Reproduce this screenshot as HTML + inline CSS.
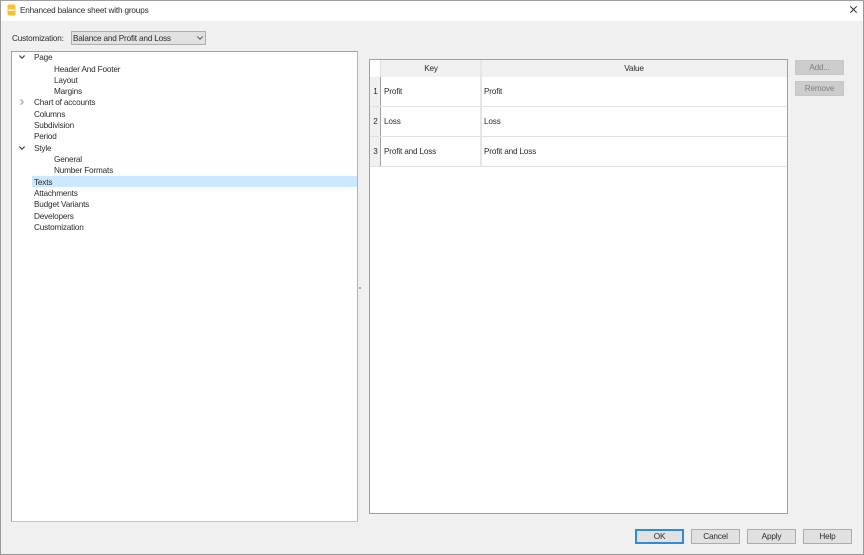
<!DOCTYPE html>
<html><head><meta charset="utf-8">
<style>
html,body{margin:0;padding:0;width:864px;height:555px;overflow:hidden;background:#f0f0f0}
body{font-family:"Liberation Sans",sans-serif;font-size:8.2px;letter-spacing:-.17px;color:#2a2a2a;position:relative}
div{position:absolute;box-sizing:border-box;white-space:nowrap}
svg{position:absolute}
.t{line-height:11px;height:11px}
.btn{background:#e1e1e1;border:1px solid #adadad;text-align:center;line-height:13px;height:15px;width:49px}
.dis{background:#cccccc;border-color:#c6c6c6;color:#808080}
.hl{background:#f0f0f0}
</style></head><body>
<div style="left:0;top:0;width:864px;height:21px;background:#fff"></div>
<div style="left:0;top:0;width:864px;height:555px;border:1px solid #989898;border-top-color:#a0a0a0"></div>
<svg style="left:7px;top:4px" width="9" height="12" viewBox="0 0 9 12"><path d="M2 .5H7Q8.500 .5 8.500 2V10Q8.500 11.500 7 11.500H2Q.5 11.500 .5 10V2Q.5 .5 2 .5Z" fill="#fbc02d"/><rect x="1.500" y="5.500" width="6" height="1.500" fill="#fff"/></svg>
<div class="t" style="left:20px;top:5px">Enhanced balance sheet with groups</div>
<svg style="left:850px;top:6px" width="7" height="7" viewBox="0 0 7 7"><path d="M.3 .3L6.700 6.700M6.700 .3L.3 6.700" stroke="#333" stroke-width="1" fill="none"/></svg>

<div class="t" style="left:12px;top:33px">Customization:</div>
<div style="left:71px;top:31px;width:135px;height:14px;background:#e1e1e1;border:1px solid #adadad"></div>
<div class="t" style="left:73px;top:33px">Balance and Profit and Loss</div>
<svg style="left:197px;top:36px" width="6" height="4" viewBox="0 0 6 4"><path d="M.3 .5L3 3.200L5.700 .5" stroke="#555" fill="none"/></svg>

<div style="left:11px;top:51px;width:347px;height:471px;background:#fff;border:1px solid #a0a0a0;border-bottom-color:#c4c4c8;border-right-color:#b4b4b4"></div>
<div style="left:32px;top:176px;width:325px;height:11px;background:#cce8ff"></div>
<svg style="left:19px;top:55px" width="6" height="4" viewBox="0 0 6 4"><path d="M.3 .5L3 3.200L5.700 .5" stroke="#444" stroke-width="1.200" fill="none"/></svg>
<svg style="left:20px;top:99px" width="4" height="6" viewBox="0 0 4 6"><path d="M.5 .3L3.200 3L.5 5.700" stroke="#a6a6a6" stroke-width="1.200" fill="none"/></svg>
<svg style="left:19px;top:146px" width="6" height="4" viewBox="0 0 6 4"><path d="M.3 .5L3 3.200L5.700 .5" stroke="#444" stroke-width="1.200" fill="none"/></svg>
<div class="t" style="left:34px;top:52px">Page</div>
<div class="t" style="left:54px;top:64px">Header And Footer</div>
<div class="t" style="left:54px;top:75px">Layout</div>
<div class="t" style="left:54px;top:86px">Margins</div>
<div class="t" style="left:34px;top:97px">Chart of accounts</div>
<div class="t" style="left:34px;top:109px">Columns</div>
<div class="t" style="left:34px;top:120px">Subdivision</div>
<div class="t" style="left:34px;top:131px">Period</div>
<div class="t" style="left:34px;top:143px">Style</div>
<div class="t" style="left:54px;top:154px">General</div>
<div class="t" style="left:54px;top:165px">Number Formats</div>
<div class="t" style="left:34px;top:177px">Texts</div>
<div class="t" style="left:34px;top:188px">Attachments</div>
<div class="t" style="left:34px;top:199px">Budget Variants</div>
<div class="t" style="left:34px;top:211px">Developers</div>
<div class="t" style="left:34px;top:222px">Customization</div>

<div style="left:359px;top:287px;width:2px;height:2px;background:#a8a8a8"></div>

<div style="left:369px;top:59px;width:419px;height:455px;background:#fff;border:1px solid #a0a0a0"></div>
<div class="hl" style="left:381px;top:60px;width:406px;height:17px"></div>
<div style="left:370px;top:77px;width:11px;height:90px;background:#f0f0f0;border-right:1px solid #a0a0a0"></div>
<div style="left:480px;top:60px;width:2px;height:107px;background:#e6e6e6"></div>
<div style="left:380px;top:60px;width:1px;height:17px;background:#e0e0e0"></div>
<div style="left:370px;top:106px;width:417px;height:1px;background:#e2e2e2"></div>
<div style="left:370px;top:136px;width:417px;height:1px;background:#e2e2e2"></div>
<div style="left:370px;top:166px;width:417px;height:1px;background:#e2e2e2"></div>
<div class="t" style="left:381px;top:63px;width:100px;text-align:center">Key</div>
<div class="t" style="left:481px;top:63px;width:306px;text-align:center">Value</div>
<div class="t" style="left:370px;top:86px;width:11px;text-align:center">1</div>
<div class="t" style="left:370px;top:116px;width:11px;text-align:center">2</div>
<div class="t" style="left:370px;top:146px;width:11px;text-align:center">3</div>
<div class="t" style="left:384px;top:86px">Profit</div>
<div class="t" style="left:484px;top:86px">Profit</div>
<div class="t" style="left:384px;top:116px">Loss</div>
<div class="t" style="left:484px;top:116px">Loss</div>
<div class="t" style="left:384px;top:146px">Profit and Loss</div>
<div class="t" style="left:484px;top:146px">Profit and Loss</div>

<div class="btn dis" style="left:795px;top:60px">Add...</div>
<div class="btn dis" style="left:795px;top:81px">Remove</div>
<div class="btn" style="left:635px;top:529px;border:2px solid #2f8bd8;line-height:11px">OK</div>
<div class="btn" style="left:691px;top:529px">Cancel</div>
<div class="btn" style="left:747px;top:529px">Apply</div>
<div class="btn" style="left:803px;top:529px">Help</div>
</body></html>
